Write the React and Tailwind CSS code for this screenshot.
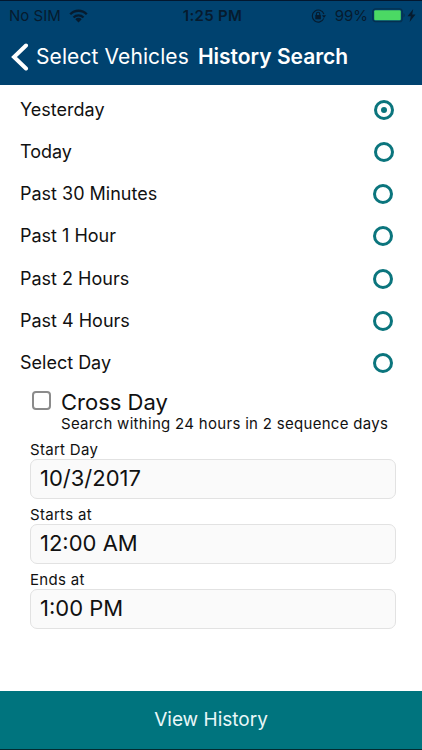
import React, { useState } from "react";

const ranges = [
  { label: "Yesterday", shift: "mr-7" },
  { label: "Today", shift: "mr-7" },
  { label: "Past 30 Minutes", shift: "mr-[29px]" },
  { label: "Past 1 Hour", shift: "mr-[29px]" },
  { label: "Past 2 Hours", shift: "mr-[29px]" },
  { label: "Past 4 Hours", shift: "mr-[29px]" },
  { label: "Select Day", shift: "mr-[29px]" },
];

const fields = [
  { label: "Start Day", value: "10/3/2017" },
  { label: "Starts at", value: "12:00 AM" },
  { label: "Ends at", value: "1:00 PM" },
];

function StatusBar() {
  return (
    <div className="grid h-[29px] grid-cols-3 items-center pl-[9px] pr-[6px] text-[15px] leading-none text-[#061b2e]">
      <div className="flex items-center gap-[8px]">
        <span className="whitespace-nowrap tracking-[0px]">No SIM</span>
        <svg width="19" height="14" viewBox="0 0 19 14" fill="none" stroke="currentColor" strokeWidth="2.3">
          <path d="M1.2 5.2a11.7 11.7 0 0 1 16.6 0" />
          <path d="M4.5 8.5a7 7 0 0 1 10 0" />
          <path d="M9.5 13.5 6.3 10.2a4.5 4.5 0 0 1 6.4 0Z" fill="currentColor" stroke="none" />
        </svg>
      </div>
      <span className="text-center text-[15px] font-semibold tracking-[0.3px]">1:25 PM</span>
      <div className="flex items-center justify-end">
        <svg className="mr-[8px]" width="16" height="14" viewBox="0 0 16 14" fill="none" stroke="currentColor" strokeWidth="1.1">
          <path d="M12.8 9.4A6 6 0 1 1 12.9 5" />
          <path d="M10.9 6.2h4.2L13 9Z" fill="currentColor" stroke="none" />
          <rect x="4.3" y="6.1" width="5.6" height="4.2" rx="0.5" fill="currentColor" stroke="none" />
          <path d="M5.4 6.3V5a1.7 1.7 0 0 1 3.4 0v1.3" />
        </svg>
        <span>99%</span>
        <svg className="ml-[4px]" width="34" height="15" viewBox="0 0 34 15">
          <rect x="0.8" y="0.8" width="29.4" height="12.9" rx="2.8" fill="none" stroke="#05304f" strokeWidth="1.2" />
          <rect x="2.2" y="2.2" width="26.6" height="10.1" rx="1.2" fill="#4bd964" />
          <path d="M31.5 5c1.7.8 1.7 3.7 0 4.5Z" fill="#05304f" />
        </svg>
        <svg className="ml-[1px]" width="9" height="13" viewBox="0 0 9 13" fill="currentColor">
          <path d="M6.2 0 .5 7.2h3.3L2.6 13l5.9-7.5H5.2Z" />
        </svg>
      </div>
    </div>
  );
}

function Radio({ checked }) {
  return (
    <span className="flex size-5 items-center justify-center rounded-full border-3 border-[#0b757d]">
      {checked && <span className="size-1.5 rounded-full bg-[#0b757d]" />}
    </span>
  );
}

export default function App() {
  const [selected, setSelected] = useState("Yesterday");

  return (
    <div className="flex h-[750px] w-[422px] flex-col overflow-hidden bg-white font-['Inter',sans-serif] text-[#111111]">
      {/* Header */}
      <header className="h-[85px] shrink-0 border-t border-[#02172f] bg-[#00426f]">
        <StatusBar />
        <div className="flex h-[53px] items-center pl-[11px] text-white">
          <svg width="18" height="28" viewBox="0 0 18 28" fill="none" stroke="currentColor" strokeWidth="4" strokeLinecap="round">
            <path d="M15 2.5 3 14l12 11.5" />
          </svg>
          <span className="ml-[7px] whitespace-nowrap text-[21px] tracking-[0.1px]">Select Vehicles</span>
          <h1 className="ml-[9px] whitespace-nowrap text-[21px] font-semibold">History Search</h1>
        </div>
      </header>

      {/* Time ranges */}
      <ul className="pt-[4px]">
        {ranges.map((range) => (
          <li
            key={range.label}
            onClick={() => setSelected(range.label)}
            className="flex h-[42.15px] items-center justify-between pl-5 text-lg"
          >
            <span>{range.label}</span>
            <span className={range.shift}>
              <Radio checked={selected === range.label} />
            </span>
          </li>
        ))}
      </ul>

      {/* Cross day */}
      <div className="flex pl-8 pt-[6px]">
        <span className="mt-[1px] size-[19px] shrink-0 rounded-[4px] border-2 border-[#8b8b8b]" />
        <div className="ml-[10px]">
          <div className="text-[22px] leading-[24px]">Cross Day</div>
          <div className="whitespace-nowrap text-[15px] leading-[20px] tracking-[0.3px]">
            Search withing 24 hours in 2 sequence days
          </div>
        </div>
      </div>

      {/* Date and time fields */}
      <div className="pl-[30px] pr-[26px] pt-[6px]">
        {fields.map((field) => (
          <div key={field.label} className="h-[65px]">
            <div className="h-[19px] text-[15px] leading-[19px] tracking-[0.3px]">{field.label}</div>
            <div className="flex h-10 items-center rounded-[7px] border border-[#e2e2e2] bg-[#fafafa] pl-[9px] text-[22px]">
              {field.value}
            </div>
          </div>
        ))}
      </div>

      <button className="mt-auto h-[59px] shrink-0 border-b border-[#022a30] bg-[#00747e] text-[19px] text-[#e9f7f8]">
        View History
      </button>
    </div>
  );
}
